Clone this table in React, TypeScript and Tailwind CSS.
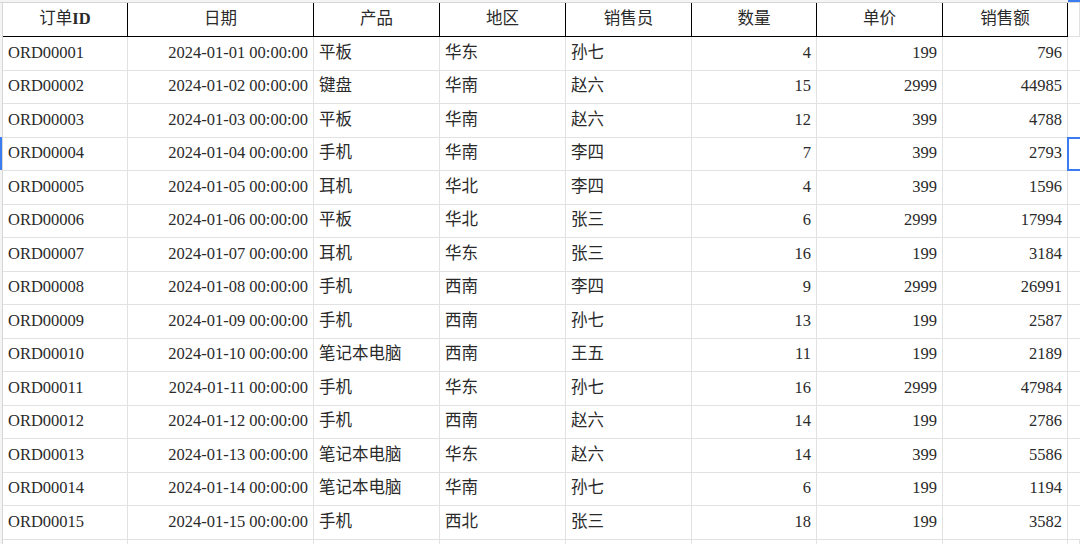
const rows: [string, string, string, string, string, number, number, number][] = [
  ["ORD00001", "2024-01-01 00:00:00", "平板", "华东", "孙七", 4, 199, 796],
  ["ORD00002", "2024-01-02 00:00:00", "键盘", "华南", "赵六", 15, 2999, 44985],
  ["ORD00003", "2024-01-03 00:00:00", "平板", "华南", "赵六", 12, 399, 4788],
  ["ORD00004", "2024-01-04 00:00:00", "手机", "华南", "李四", 7, 399, 2793],
  ["ORD00005", "2024-01-05 00:00:00", "耳机", "华北", "李四", 4, 399, 1596],
  ["ORD00006", "2024-01-06 00:00:00", "平板", "华北", "张三", 6, 2999, 17994],
  ["ORD00007", "2024-01-07 00:00:00", "耳机", "华东", "张三", 16, 199, 3184],
  ["ORD00008", "2024-01-08 00:00:00", "手机", "西南", "李四", 9, 2999, 26991],
  ["ORD00009", "2024-01-09 00:00:00", "手机", "西南", "孙七", 13, 199, 2587],
  ["ORD00010", "2024-01-10 00:00:00", "笔记本电脑", "西南", "王五", 11, 199, 2189],
  ["ORD00011", "2024-01-11 00:00:00", "手机", "华东", "孙七", 16, 2999, 47984],
  ["ORD00012", "2024-01-12 00:00:00", "手机", "西南", "赵六", 14, 199, 2786],
  ["ORD00013", "2024-01-13 00:00:00", "笔记本电脑", "华东", "赵六", 14, 399, 5586],
  ["ORD00014", "2024-01-14 00:00:00", "笔记本电脑", "华南", "孙七", 6, 199, 1194],
  ["ORD00015", "2024-01-15 00:00:00", "手机", "西北", "张三", 18, 199, 3582],
];

const cols = "grid grid-cols-[125px_186px_126px_126px_126px_125px_126px_125px_1fr]";
const cell = "border-r border-b border-[#e2e2e2] flex items-center px-[5px] whitespace-nowrap";
const head = "border-r border-b border-black flex items-center justify-center";

export default function App() {
  return (
    <div
      className="w-[1080px] h-[544px] overflow-hidden bg-white text-[16.5px] text-[#2a2a2a]"
      style={{ fontFamily: '"Liberation Serif", "Noto Sans CJK SC", serif' }}
    >
      <div className="h-[3px] bg-[#f4f4f4] border-b border-[#d6d6d6] flex">
        <div className="w-[1068px]" />
        <div className="flex-1 bg-[#3b7cf0]" />
      </div>
      <div className="flex">
        <div className="w-[3px] shrink-0 bg-[#f4f4f4] border-r border-[#d6d6d6] flex flex-col">
          <div className="h-[33px]" />
          <div className="h-[100.5px]" />
          <div className="h-[33.5px] bg-[#3b7cf0]" />
        </div>
        <div className="flex-1">
          <div className={`${cols} h-[34px]`}>
            <div className={head}>
              订单<span className="font-bold">ID</span>
            </div>
            <div className={head}>日期</div>
            <div className={head}>产品</div>
            <div className={head}>地区</div>
            <div className={head}>销售员</div>
            <div className={head}>数量</div>
            <div className={head}>单价</div>
            <div className={head}>销售额</div>
            <div className="border-r border-b border-[#e2e2e2]" />
          </div>
          {rows.map((r, i) => (
            <div key={r[0]} className={`${cols} h-[33.5px]`}>
              <div className={cell}>{r[0]}</div>
              <div className={`${cell} justify-end`}>{r[1]}</div>
              <div className={cell}>{r[2]}</div>
              <div className={cell}>{r[3]}</div>
              <div className={cell}>{r[4]}</div>
              <div className={`${cell} justify-end`}>{r[5]}</div>
              <div className={`${cell} justify-end`}>{r[6]}</div>
              <div className={`${cell} justify-end`}>{r[7]}</div>
              <div className="border-b border-[#e2e2e2] relative">
                {i === 3 && (
                  <div className="absolute -top-px -left-px -bottom-px right-[-2px] border-2 border-[#3b7cf0]" />
                )}
              </div>
            </div>
          ))}
          <div className={`${cols} h-[33.5px]`}>
            {Array.from({ length: 9 }).map((_, k) => (
              <div key={k} className="border-r border-b border-[#e2e2e2]" />
            ))}
          </div>
        </div>
      </div>
    </div>
  );
}
